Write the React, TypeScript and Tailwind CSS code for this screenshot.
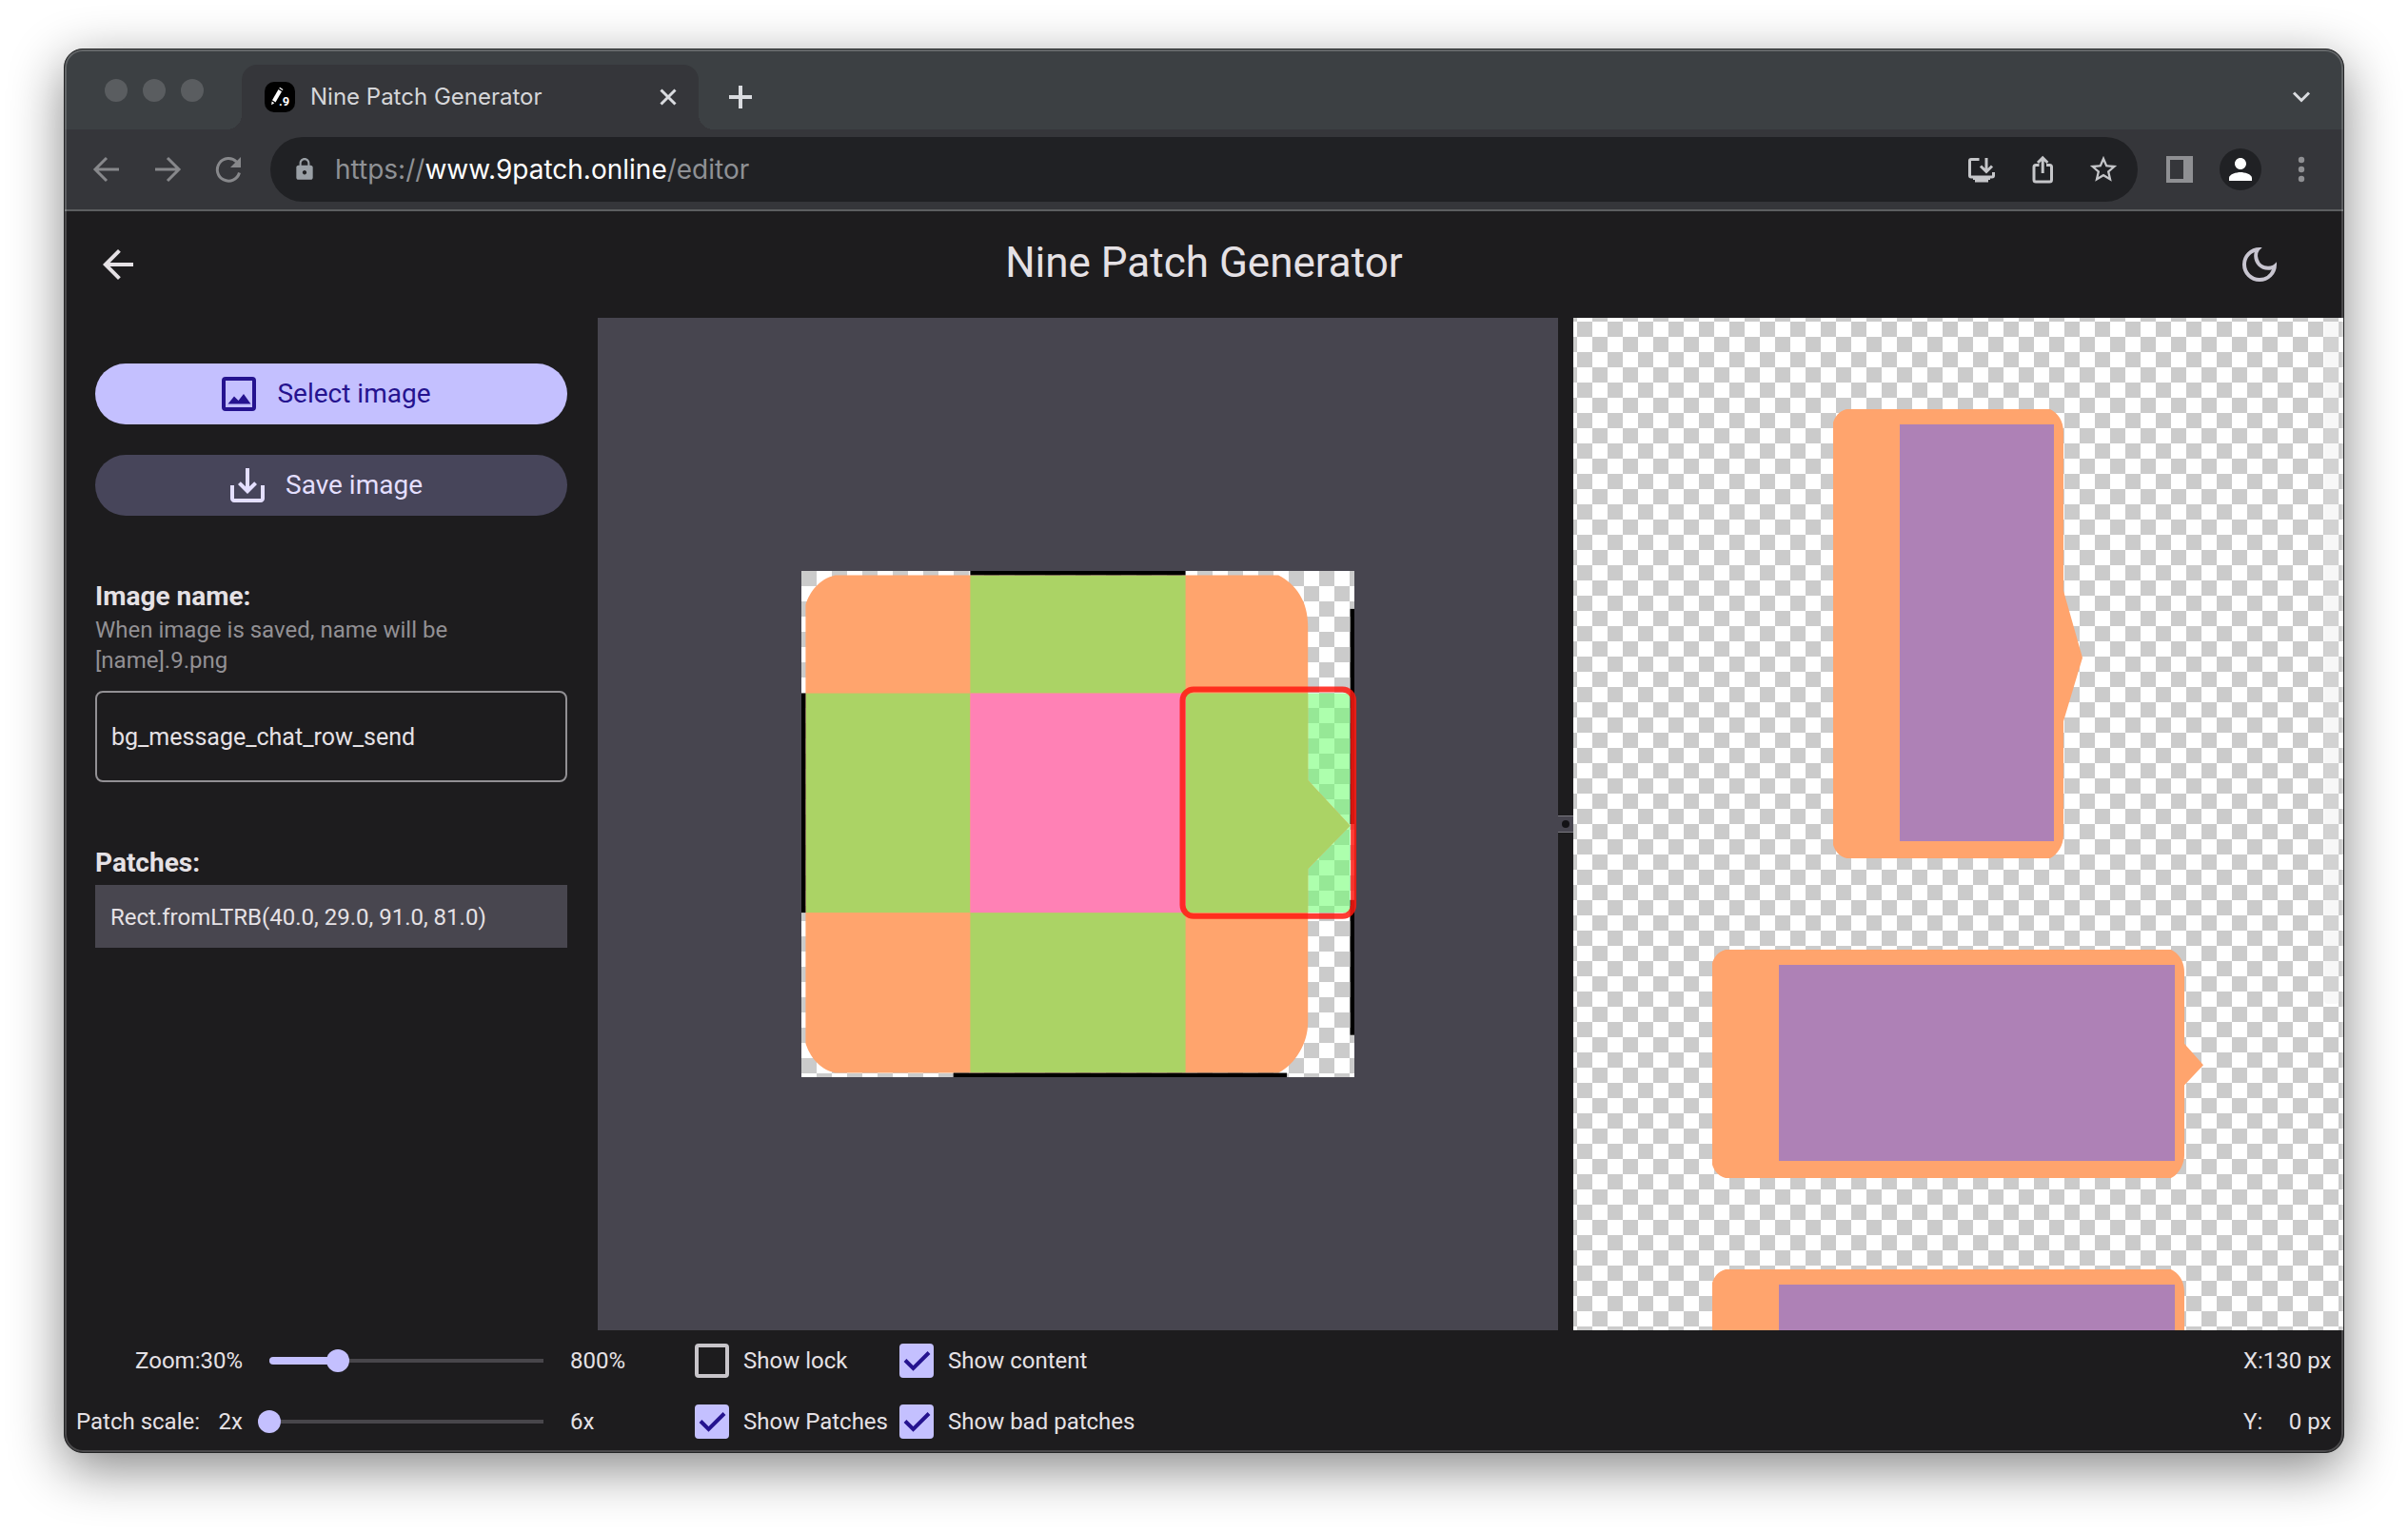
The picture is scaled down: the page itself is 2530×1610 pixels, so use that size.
import React, { ReactNode, useState } from "react";
import {
  MdArrowBack,
  MdLock,
  MdOutlineDarkMode,
  MdPerson,
  MdSaveAlt,
  MdStarBorder,
} from "react-icons/md";

const CHECKER =
  "bg-[conic-gradient(#fff_25%,#cbcbcb_0_50%,#fff_0_75%,#cbcbcb_0)] bg-[length:32px_32px]";

// speech bubble, source size 129x118, fixed borders l39 t28 r38 b38
const BODY =
  "M1 8C2 5 4 2 8 1H113C117 3 120 7 120 13V49.6L130 60.4L120 70.6V107C120 112 117 117 113 119H8C4 118 2 115 1 112Z";

type ToggleKey = "lock" | "content" | "patches" | "bad";

export default function App() {
  return (
    <div className="h-screen bg-white flex px-[67px] pt-[51px] pb-[83px] font-['Roboto',sans-serif]">
      <div className="relative flex-1 min-w-0 flex flex-col overflow-hidden rounded-[20px] border border-[#232425] bg-[#1d1c1e] text-[#e5e1e5] shadow-[0_16px_56px_rgba(0,0,0,0.48)]">
        <TabStrip />
        <Toolbar />
        <Editor />
        <div className="pointer-events-none absolute inset-0 rounded-[19px] border-2 border-white/20"></div>
      </div>
    </div>
  );
}

function TabStrip() {
  return (
    <div className="h-[84px] shrink-0 flex items-end bg-[#3c4043] font-['Inter',sans-serif]">
      <div className="flex gap-4 pl-[42px] pb-[29px]">
        <span className="size-6 rounded-full bg-[#5a5d60]"></span>
        <span className="size-6 rounded-full bg-[#5a5d60]"></span>
        <span className="size-6 rounded-full bg-[#5a5d60]"></span>
      </div>
      <div className="relative ml-10 w-[480px] h-[68px] rounded-t-2xl bg-[#35363a] flex items-center pl-6 pr-5 before:absolute before:bottom-0 before:-left-4 before:size-4 before:bg-[radial-gradient(circle_at_0_0,transparent_16px,#35363a_16px)] after:absolute after:bottom-0 after:-right-4 after:size-4 after:bg-[radial-gradient(circle_at_100%_0,transparent_16px,#35363a_16px)]">
        <FavIcon />
        <span className="ml-4 flex-1 text-[24px] leading-8 text-[#d5d6d9]">
          Nine Patch Generator
        </span>
        <button aria-label="Close tab" className="size-6">
          <svg viewBox="0 0 24 24" fill="none" stroke="#dadce0" strokeWidth="3">
            <path d="M4.500 4.500L19.500 19.500M19.500 4.500L4.500 19.500" />
          </svg>
        </button>
      </div>
      <button aria-label="New tab" className="ml-8 mb-[22px] size-6">
        <svg viewBox="0 0 24 24" fill="none" stroke="#dadce0" strokeWidth="4">
          <path d="M12 0V24M0 12H24" />
        </svg>
      </button>
      <button aria-label="Search tabs" className="ml-auto mr-8 mb-[22px] size-6">
        <svg viewBox="0 0 24 24" fill="none" stroke="#dadce0" strokeWidth="3">
          <path d="M4 7.500L12 15.500L20 7.500" />
        </svg>
      </button>
    </div>
  );
}

function FavIcon() {
  return (
    <svg className="size-8" viewBox="0 0 32 32">
      <rect width="32" height="32" rx="10" fill="#000" />
      <path d="M14.500 8L18 10.200L11.500 21.500L8 19.300Z" fill="#fff" />
      <path d="M15.300 6.700L16 5.800L19.500 8L18.800 9Z" fill="#fff" />
      <path d="M7.600 20.500L10.300 22.200L7.200 24.300Z" fill="#fff" />
      <text
        x="15"
        y="25"
        fontSize="13"
        fontWeight="700"
        fontFamily="Roboto"
        fill="#fff"
      >
        .9
      </text>
    </svg>
  );
}

function BarButton({ label, children }: { label: string; children: ReactNode }) {
  return (
    <button
      aria-label={label}
      className="w-16 h-16 flex items-center justify-center"
    >
      {children}
    </button>
  );
}

function Toolbar() {
  return (
    <div className="h-[86px] shrink-0 flex items-center px-3 border-b-2 border-[#5c5e60] bg-[#35363a] font-['Inter',sans-serif]">
      <BarButton label="Back">
        <svg className="size-8" viewBox="0 0 32 32" fill="none" stroke="#87888b" strokeWidth="3">
          <path d="M29 16H4.500M16 4L4 16L16 28" />
        </svg>
      </BarButton>
      <BarButton label="Forward">
        <svg className="size-8" viewBox="0 0 32 32" fill="none" stroke="#87888b" strokeWidth="3">
          <path d="M3 16H27.500M16 4L28 16L16 28" />
        </svg>
      </BarButton>
      <BarButton label="Reload">
        <svg className="size-8" viewBox="0 0 32 32" fill="none" stroke="#87888b" strokeWidth="3">
          <path d="M27.500 19.500A11.800 11.800 0 1 1 24.500 8" />
          <path d="M29 3V14H18Z" fill="#87888b" stroke="none" />
        </svg>
      </BarButton>
      <div className="ml-3 mr-3 flex-1 h-[68px] rounded-full bg-[#202124] flex items-center pl-5 pr-1">
        <MdLock className="w-8 text-[26px] text-[#9aa0a6]" />
        <p className="ml-4 flex-1 text-[28px] leading-9 text-[#8f9195]">
          https://<span className="text-white">www.9patch.online</span>/editor
        </p>
        <BarButton label="Install app">
          <svg className="size-8" viewBox="0 0 32 32" fill="none" stroke="#c5c6c9" strokeWidth="3">
            <path d="M13.500 5.500H5Q3.500 5.500 3.500 7V22.500Q3.500 24 5 24H27Q28.500 24 28.500 22.500V19" />
            <path d="M21 4V18M15 12.500L21 18.500L27 12.500" />
            <path d="M7 24H25V27H23V29.500H9V27H7Z" fill="#c5c6c9" stroke="none" />
          </svg>
        </BarButton>
        <BarButton label="Share">
          <svg className="size-8" viewBox="0 0 32 32" fill="none" stroke="#c5c6c9" strokeWidth="3">
            <path d="M12.500 11.500H9Q7 11.500 7 13.500V27Q7 29 9 29H23.500Q25.500 29 25.500 27V13.500Q25.500 11.500 23.500 11.500H20" />
            <path d="M16.200 20V4M11 9L16.200 3.800L21.400 9" />
          </svg>
        </BarButton>
        <BarButton label="Bookmark">
          <MdStarBorder className="text-[34px] text-[#c5c6c9]" />
        </BarButton>
      </div>
      <BarButton label="Side panel">
        <svg className="size-7" viewBox="0 0 28 28">
          <path fillRule="evenodd" d="M0 0H28V28H0ZM4 4V24H18V4Z" fill="#8f9093" />
        </svg>
      </BarButton>
      <BarButton label="Profile">
        <span className="size-11 rounded-full bg-[#202124] flex items-center justify-center">
          <MdPerson className="text-[36px] text-white" />
        </span>
      </BarButton>
      <BarButton label="Menu">
        <svg className="size-7" viewBox="0 0 28 28" fill="#8f9093">
          <circle cx="14" cy="4" r="3.200" />
          <circle cx="14" cy="14" r="3.200" />
          <circle cx="14" cy="24" r="3.200" />
        </svg>
      </BarButton>
    </div>
  );
}

function Editor() {
  return (
    <>
      <header className="h-28 shrink-0 grid grid-cols-[1fr_auto_1fr] items-center px-8">
        <button aria-label="Go back" className="size-12">
          <MdArrowBack className="size-12 text-[#e5e1e5]" />
        </button>
        <h1 className="pb-1 text-[44px] leading-[52px]">Nine Patch Generator</h1>
        <button aria-label="Dark mode" className="size-12 mr-8 justify-self-end">
          <MdOutlineDarkMode className="size-12 text-[#c8c5d0]" />
        </button>
      </header>
      <main className="flex-1 min-h-0 flex">
        <Sidebar />
        <section className="flex-[555] min-w-0 flex items-center justify-center bg-[#47454f]">
          <PatchCanvas />
        </section>
        <div className="w-4 shrink-0 flex items-center">
          <div className="w-4 h-[18px] flex items-center justify-center bg-[#47454f] border-y border-[#7a7880]">
            <span className="size-2 rounded-full bg-[#141316]"></span>
          </div>
        </div>
        <Previews />
      </main>
      <Footer />
    </>
  );
}

function Sidebar() {
  const [name, setName] = useState("bg_message_chat_row_send");
  return (
    <aside className="w-[560px] shrink-0 px-8 pt-12 flex flex-col">
      <button className="h-16 rounded-full bg-[#c4c0ff] text-[#25138f] pl-8 pr-12 flex items-center justify-center gap-4 text-[28px]">
        <svg className="size-12" viewBox="0 0 48 48">
          <rect x="8" y="8" width="32" height="32" rx="2" fill="none" stroke="currentColor" strokeWidth="4" />
          <path d="M12.500 34.500L19 26.500L23.500 31L29 24L36.500 34.500Z" fill="currentColor" />
        </svg>
        Select image
      </button>
      <button className="mt-8 h-16 rounded-full bg-[#47455a] text-[#e4dfff] pl-8 pr-12 flex items-center justify-center gap-4 text-[28px]">
        <MdSaveAlt className="size-12" />
        Save image
      </button>
      <label htmlFor="image-name" className="mt-[66px] text-[28px] leading-[38px] font-bold">
        Image name:
      </label>
      <p className="text-[24px] leading-8 text-[#929094]">
        When image is saved, name will be
        <br />
        [name].9.png
      </p>
      <input
        id="image-name"
        className="mt-4 h-24 w-full rounded-lg border-2 border-[#929094] bg-transparent px-[15px] text-[25px] outline-none"
        value={name}
        onChange={(e) => setName(e.target.value)}
      />
      <h2 className="mt-[66px] text-[28px] leading-[38px] font-bold">Patches:</h2>
      <div className="mt-1 h-[66px] px-4 pt-0.5 flex items-center bg-[#48464f] text-[24px]">
        Rect.fromLTRB(40.0, 29.0, 91.0, 81.0)
      </div>
    </aside>
  );
}

function PatchCanvas() {
  return (
    <div className={`w-[581px] h-[532px] ${CHECKER}`}>
      <svg
        className="size-full overflow-visible"
        viewBox="0 0 131 120"
        preserveAspectRatio="none"
      >
        <defs>
          <clipPath id="body">
            <path d={BODY} />
          </clipPath>
        </defs>
        <rect x="91" y="29" width="39" height="52" fill="#6cff6c" fillOpacity="0.56" />
        <path d={BODY} fill="#ffa46d" />
        <g clipPath="url(#body)" fill="#abd365">
          <rect x="40" y="1" width="51" height="28" />
          <rect x="1" y="29" width="39" height="52" />
          <rect x="91" y="29" width="39" height="52" />
          <rect x="40" y="81" width="51" height="38" />
          <rect x="40" y="29" width="51" height="52" fill="#ff81b5" />
        </g>
        <g fill="#000">
          <rect x="40" y="0" width="51" height="1" />
          <rect x="0" y="29" width="1" height="52" />
          <rect x="36" y="119" width="79" height="1" />
          <rect x="130" y="9" width="1" height="51" />
          <rect x="130" y="78" width="1" height="32" />
        </g>
        <rect
          x="90.300"
          y="28.100"
          width="40.500"
          height="53.700"
          rx="2.600"
          fill="none"
          stroke="#ff1a10"
          strokeOpacity="0.85"
          strokeWidth="1.350"
        />
      </svg>
    </div>
  );
}

// patch corners are kept at 2x, everything between them is stretched
function Bubble({ w, h }: { w: number; h: number }) {
  const k = (h - 132) / 52;
  const y = (v: number) => 56 + (v - 29) * k;
  const r = w - 20;
  const d = `M0 14C2 8 6 2 14 0H${r - 14}C${r - 6} 4 ${r} 12 ${r} 24V${y(49.6)}L${w} ${y(60.4)}L${r} ${y(70.6)}V${h - 24}C${r} ${h - 14} ${r - 6} ${h - 4} ${r - 14} ${h}H14C6 ${h - 2} 2 ${h - 8} 0 ${h - 14}Z`;
  return (
    <svg className="shrink-0" width={w} height={h} viewBox={`0 0 ${w} ${h}`}>
      <path d={d} fill="#ffa46d" />
      <rect x="70" y="16" width={w - 100} height={h - 34} fill="#ae81b6" />
    </svg>
  );
}

function Previews() {
  return (
    <section
      className={`relative flex-[445] min-w-0 overflow-hidden flex flex-col items-center gap-24 pt-24 bg-[position:4px_4px] ${CHECKER}`}
    >
      <Bubble w={262} h={472} />
      <Bubble w={516} h={240} />
      <Bubble w={516} h={472} />
      <div className="absolute top-1 right-1 w-4 h-[717px] rounded-b bg-[#e5e5e5]/30"></div>
    </section>
  );
}

function Slider({ id, value, onChange }: { id: string; value: number; onChange: (v: number) => void }) {
  return (
    <div className="relative h-6 w-[312px] flex items-center">
      <div className="absolute inset-x-3 flex items-center">
        <div className="absolute inset-x-0 h-1 bg-[#48464b]"></div>
        <div
          className="relative h-2 rounded-l-full bg-[#c4c0ff]"
          style={{ width: `${value}%` }}
        ></div>
      </div>
      <input
        id={id}
        type="range"
        min={0}
        max={100}
        value={value}
        onChange={(e) => onChange(Number(e.target.value))}
        className="relative w-full h-6 appearance-none bg-transparent [&::-webkit-slider-thumb]:appearance-none [&::-webkit-slider-thumb]:size-6 [&::-webkit-slider-thumb]:rounded-full [&::-webkit-slider-thumb]:bg-[#c4c0ff]"
      />
    </div>
  );
}

function Check({ label, checked, onChange }: { label: string; checked: boolean; onChange: () => void }) {
  return (
    <label className="h-16 flex items-center gap-[15px] whitespace-nowrap">
      <span className="relative size-9">
        <input
          type="checkbox"
          checked={checked}
          onChange={onChange}
          className="block size-9 appearance-none rounded border-4 border-[#c8c5ca] checked:border-[#c4c0ff] checked:bg-[#c4c0ff]"
        />
        {checked && (
          <svg
            className="pointer-events-none absolute inset-0 size-9"
            viewBox="0 0 36 36"
            fill="none"
            stroke="#25138f"
            strokeWidth="4"
          >
            <path d="M6 17.500L14.500 26L31 9.500" />
          </svg>
        )}
      </span>
      {label}
    </label>
  );
}

function Footer() {
  const [zoom, setZoom] = useState(25);
  const [scale, setScale] = useState(0);
  const [show, setShow] = useState({
    lock: false,
    content: true,
    patches: true,
    bad: true,
  });
  const toggle = (key: ToggleKey) => setShow({ ...show, [key]: !show[key] });
  return (
    <footer className="shrink-0 flex pl-3 pr-[13px] text-[24px] leading-8">
      <div className="grid grid-cols-[175px_312px_115px] gap-x-4 auto-rows-[64px] items-center whitespace-nowrap">
        <label htmlFor="zoom" className="text-right">
          Zoom:30%
        </label>
        <Slider id="zoom" value={zoom} onChange={setZoom} />
        <span>800%</span>
        <label htmlFor="scale" className="flex justify-between">
          <span>Patch scale:</span>
          <span>2x</span>
        </label>
        <Slider id="scale" value={scale} onChange={setScale} />
        <span>6x</span>
      </div>
      <div className="ml-4 w-[215px]">
        <Check label="Show lock" checked={show.lock} onChange={() => toggle("lock")} />
        <Check label="Show Patches" checked={show.patches} onChange={() => toggle("patches")} />
      </div>
      <div>
        <Check label="Show content" checked={show.content} onChange={() => toggle("content")} />
        <Check label="Show bad patches" checked={show.bad} onChange={() => toggle("bad")} />
      </div>
      <div className="ml-auto w-[92px] grid auto-rows-[64px] items-center whitespace-nowrap">
        <div className="flex justify-between">
          <span>X:</span>
          <span>130 px</span>
        </div>
        <div className="flex justify-between">
          <span>Y:</span>
          <span>0 px</span>
        </div>
      </div>
    </footer>
  );
}
